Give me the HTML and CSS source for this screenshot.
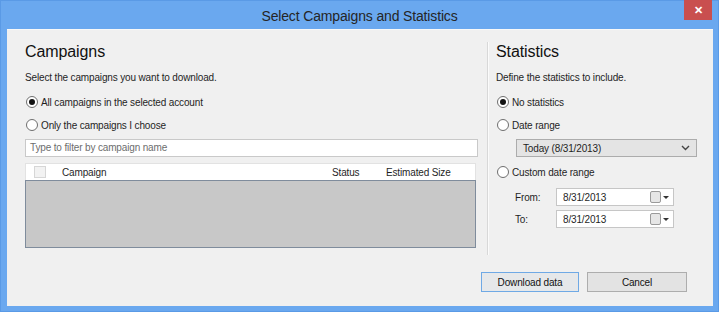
FILE: index.html
```html
<!DOCTYPE html>
<html>
<head>
<meta charset="utf-8">
<link rel="stylesheet" href="styles.css">
</head>
<body>
<div class="window">
  <div class="titlebar">
    <div class="title">Select Campaigns and Statistics</div>
    <div class="close">&#x2715;</div>
  </div>
  <div class="client">
    <div class="panels">
      <div class="left">
        <div class="heading">Campaigns</div>
        <div class="desc">Select the campaigns you want to download.</div>
        <div class="radio-row r1"><span class="radio checked"></span><span>All campaigns in the selected account</span></div>
        <div class="radio-row r2"><span class="radio"></span><span>Only the campaigns I choose</span></div>
        <div class="filter">Type to filter by campaign name</div>
        <div class="table">
          <div class="thead">
            <span class="cb"></span>
            <span class="col-campaign">Campaign</span>
            <span class="col-status">Status</span>
            <span class="col-size">Estimated Size</span>
          </div>
          <div class="tbody"></div>
        </div>
      </div>
      <div class="sep"></div>
      <div class="right">
        <div class="heading">Statistics</div>
        <div class="desc">Define the statistics to include.</div>
        <div class="radio-row r1"><span class="radio checked"></span><span>No statistics</span></div>
        <div class="radio-row r2"><span class="radio"></span><span>Date range</span></div>
        <div class="select">
          <span>Today (8/31/2013)</span>
          <svg class="chev" width="9" height="6" viewBox="0 0 9 6"><path d="M1 1 L4.5 4.5 L8 1" fill="none" stroke="#444" stroke-width="1.4"/></svg>
        </div>
        <div class="radio-row r3"><span class="radio"></span><span>Custom date range</span></div>
        <div class="date-row d1">
          <span class="dlabel">From:</span>
          <div class="date">
            <span>8/31/2013</span>
            <span class="cal"></span><span class="tri"></span>
          </div>
        </div>
        <div class="date-row d2">
          <span class="dlabel">To:</span>
          <div class="date">
            <span>8/31/2013</span>
            <span class="cal"></span><span class="tri"></span>
          </div>
        </div>
      </div>
    </div>
    <div class="footer">
      <div class="btn default">Download data</div>
      <div class="btn">Cancel</div>
    </div>
  </div>
</div>
</body>
</html>
```

FILE: styles.css
```css
html, body {
  margin: 0;
  padding: 0;
}
body {
  width: 719px;
  height: 312px;
  overflow: hidden;
  font-family: "Liberation Sans", Arial, sans-serif;
  font-size: 10px;
  letter-spacing: -0.15px;
  color: #1f1f1f;
  background: #6aa8ef;
}
.window {
  width: 719px;
  height: 312px;
  display: flex;
  flex-direction: column;
  box-sizing: border-box;
  border: 1px solid #5a9ae6;
}
.titlebar {
  height: 28px;
  position: relative;
  display: flex;
  align-items: center;
  justify-content: center;
}
.title {
  font-size: 14px;
  color: #252525;
  padding-top: 1px;
  letter-spacing: -0.15px;
}
.close {
  position: absolute;
  top: -1px;
  right: 6px;
  width: 28px;
  height: 20px;
  background: #c94f4f;
  color: #fff;
  font-size: 11px;
  font-weight: bold;
  display: flex;
  align-items: center;
  justify-content: center;
}
.client {
  flex: 1;
  margin: 0 5px 5px 6px;
  background: #f0f0f0;
  border-top: 1px solid #f8f8f8;
  display: flex;
  flex-direction: column;
}
.panels {
  height: 225px;
  display: flex;
}
.left {
  margin-left: 18px;
  width: 453px;
  padding-top: 11px;
}
.sep {
  width: 1px;
  background: #d8d8d8;
  border-right: 1px solid #fbfbfb;
  margin: 12px 0 0 9px;
}
.right {
  margin-left: 7px;
  width: 201px;
  padding-top: 11px;
}
.heading {
  height: 22px;
  line-height: 22px;
  font-size: 16px;
  letter-spacing: -0.1px;
  color: #111;
}
.desc {
  margin-top: 7px;
  height: 16px;
  line-height: 16px;
}
.radio-row {
  height: 16px;
  display: flex;
  align-items: center;
  gap: 3px;
}
.radio-row.r1 { margin-top: 8px; }
.radio-row.r2 { margin-top: 7px; }
.radio-row.r3 { margin-top: 7px; }
.radio {
  width: 10px;
  height: 10px;
  border: 1px solid #6e6e6e;
  border-radius: 50%;
  background: #fff;
  margin-left: 1px;
  position: relative;
  flex: none;
}
.radio.checked::after {
  content: "";
  position: absolute;
  left: 2px;
  top: 2px;
  width: 6px;
  height: 6px;
  border-radius: 50%;
  background: #111;
}
.filter {
  margin-top: 6px;
  height: 18px;
  box-sizing: border-box;
  border: 1px solid #c9c9c9;
  background: #fff;
  color: #6d6d6d;
  padding-left: 4px;
  line-height: 16px;
}
.table {
  margin-top: 6px;
  width: 451px;
}
.thead {
  height: 17px;
  box-sizing: border-box;
  background: #fff;
  border: 1px solid #e2e2e2;
  border-bottom: none;
  display: flex;
  align-items: center;
}
.cb {
  width: 10px;
  height: 10px;
  border: 1px solid #d6d6d6;
  background: #f2f2f2;
  margin-left: 8px;
}
.col-campaign { margin-left: 16px; }
.col-status { margin-left: auto; width: 54px; }
.col-size { width: 89px; }
.tbody {
  height: 68px;
  box-sizing: border-box;
  background: #c8c8c8;
  border: 1px solid #7f8c9c;
}
.select {
  margin: 6px 0 0 20px;
  height: 18px;
  box-sizing: border-box;
  border: 1px solid #acacac;
  background: #e4e4e4;
  display: flex;
  align-items: center;
  justify-content: space-between;
  padding: 0 6px 0 6px;
}
.date-row {
  display: flex;
  align-items: center;
  height: 18px;
  margin-left: 19px;
}
.date-row.d1 { margin-top: 8px; }
.date-row.d2 { margin-top: 4px; }
.dlabel {
  width: 41px;
}
.date {
  width: 118px;
  height: 18px;
  box-sizing: border-box;
  border: 1px solid #c6c6c6;
  background: #fff;
  display: flex;
  align-items: center;
  padding-left: 6px;
}
.cal {
  margin-left: auto;
  width: 9px;
  height: 10px;
  border: 1px solid #9a9a9a;
  border-radius: 2px;
  background: #e6e6e6;
}
.tri {
  width: 0;
  height: 0;
  border-left: 3px solid transparent;
  border-right: 3px solid transparent;
  border-top: 3px solid #333;
  margin: 0 4px 0 2px;
}
.footer {
  display: flex;
  justify-content: flex-end;
  gap: 8px;
  padding: 17px 26px 0 0;
}
.btn {
  width: 100px;
  height: 20px;
  box-sizing: border-box;
  border: 1px solid #adadad;
  background: #e3e3e3;
  display: flex;
  align-items: center;
  justify-content: center;
  color: #111;
}
.btn.default {
  width: 98px;
  border: 1px solid #6fa9e5;
  background: #e6e8ea;
}
```
